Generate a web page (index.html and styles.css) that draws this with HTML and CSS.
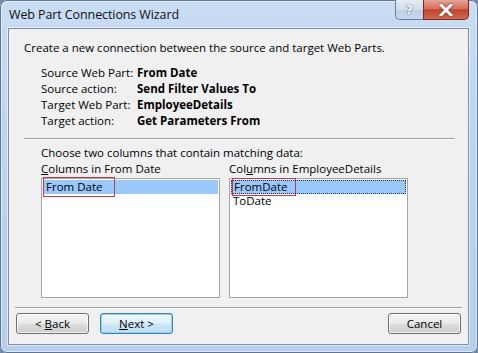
FILE: index.html
```html
<!DOCTYPE html>
<html>
<head>
<meta charset="utf-8">
<link rel="stylesheet" href="styles.css">
</head>
<body>
<div class="window">
  <div class="titlebar">
    <div class="title">Web Part Connections Wizard</div>
    <div class="controls">
      <div class="ctl help">?</div>
      <div class="ctl close">
        <svg width="14" height="12" viewBox="0 0 14 12"><path d="M2 1 L12 11 M12 1 L2 11" stroke="#fff" stroke-width="3" stroke-linecap="square"/></svg>
      </div>
    </div>
  </div>
  <div class="client">
    <div class="top">
      <div class="intro">Create a new connection between the source and target Web Parts.</div>
      <div class="details">
        <span>Source Web Part:</span><b>From Date</b>
        <span>Source action:</span><b>Send Filter Values To</b>
        <span>Target Web Part:</span><b>EmployeeDetails</b>
        <span>Target action:</span><b>Get Parameters From</b>
      </div>
      <div class="sep"></div>
      <div class="choose">Choose two columns that contain matching data:</div>
      <div class="lists">
        <div class="col">
          <div class="lbl"><u>C</u>olumns in From Date</div>
          <div class="listbox">
            <div class="item sel"><span class="mark">From Date</span></div>
          </div>
        </div>
        <div class="col">
          <div class="lbl">Col<u>u</u>mns in EmployeeDetails</div>
          <div class="listbox">
            <div class="item sel focus"><span class="mark">FromDate</span></div>
            <div class="item">ToDate</div>
          </div>
        </div>
      </div>
    </div>
    <div class="sep2"></div>
    <div class="buttons">
      <div class="btn"><span>&lt; <u>B</u>ack</span></div>
      <div class="btn default"><span><u>N</u>ext &gt;</span></div>
      <div class="spacer"></div>
      <div class="btn"><span>Cancel</span></div>
    </div>
  </div>
</div>
</body>
</html>
```
FILE: styles.css
```css
* { box-sizing: border-box; }
html, body { margin: 0; padding: 0; }
body {
  width: 478px; height: 353px; overflow: hidden;
  background: #6d87a8;
  font-family: "Open Sans", "Noto Sans", sans-serif;
  font-size: 11.5px;
  color: #000;
}
.window {
  width: 478px; height: 353px;
  background: linear-gradient(180deg, #c9ddf3 0%, #bcd4ee 40%, #b7cfea 100%);
  border-radius: 7px;
  box-shadow: inset 0 0 0 1px #5d7597, inset 0 0 0 2px rgba(255,255,255,0.5);
  display: flex; flex-direction: column;
}
.titlebar {
  height: 28px;
  display: flex; justify-content: space-between; align-items: flex-start;
  flex: none;
}
.title {
  padding: 6px 0 0 9px;
  font-size: 12.5px;
  color: #111;
  letter-spacing: -0.1px;
}
.controls { display: flex; margin-right: 9px; }
.ctl {
  height: 20px;
  border: 1px solid #6b7f9a;
  border-top: none;
  display: flex; align-items: center; justify-content: center;
}
.help {
  width: 28px;
  border-radius: 0 0 0 5px;
  border-right: none;
  background: linear-gradient(180deg, #e4ecf6 0%, #d2deec 50%, #bfd0e4 51%, #c9d9ec 100%);
  color: #fff;
  font-size: 13px; font-weight: bold;
  text-shadow: 0 0 1px #3a4c66, 0 0 1px #3a4c66;
  font-family: "DejaVu Sans", sans-serif;
}
.close {
  width: 46px;
  border-radius: 0 0 5px 0;
  border-color: #7a2a24;
  background: linear-gradient(180deg, #e7a598 0%, #d7705c 45%, #c1442c 52%, #d26a4f 100%);
}
.close svg { filter: drop-shadow(0 0 1px #5b1d14); }
.client {
  flex: none;
  margin: 0 9px 0 8px;
  height: 317px;
  background: #f0f0f0;
  border: 1px solid #7f8fa6;
  box-shadow: 0 0 0 1px rgba(255,255,255,0.55);
  display: flex; flex-direction: column;
}
.top { padding: 11px 13px 0 15px; }
.intro { line-height: 16px; }
.details {
  margin-top: 9px;
  padding-left: 17px;
  display: grid;
  grid-template-columns: 96px auto;
  line-height: 16px;
}
.details b { font-weight: bold; }
.sep {
  margin-top: 9px;
  height: 2px;
  border-top: 1px solid #a0a0a0;
  border-bottom: 1px solid #fff;
}
.choose { margin-top: 5px; padding-left: 17px; line-height: 16px; }
.lists { display: flex; gap: 9px; padding-left: 17px; }
.col { display: flex; flex-direction: column; width: 179px; }
.lbl { line-height: 16px; height: 17px; }
.listbox {
  height: 120px;
  background: #fff;
  border: 1px solid #a5a5a5;
  padding: 1px;
}
.item {
  height: 14px;
  line-height: 14px;
  padding-left: 2px;
  white-space: nowrap;
}
.item.sel { background: #99c8fc; }
.item.focus { outline: 1px dotted #333; outline-offset: -1px; }
.mark {
  display: inline-block;
  outline: 1px solid #c3374d;
  outline-offset: 2px;
  padding-right: 10px;
  margin-left: 1px;
  height: 14px;
}
.item.focus .mark { padding-right: 6px; outline-offset: 1px; }
.sep2 {
  margin: 9px 6px 0 6px;
  height: 2px;
  border-top: 1px solid #a0a0a0;
  border-bottom: 1px solid #fff;
}
.buttons {
  display: flex;
  padding: 4px 7px 0 7px;
  gap: 11px;
}
.spacer { flex: 1; }
.btn {
  width: 73px; height: 21px;
  border: 1px solid #707070;
  border-radius: 3px;
  background: linear-gradient(180deg, #f3f3f3 0%, #ebebeb 48%, #dddddd 52%, #cfcfcf 100%);
  box-shadow: inset 0 0 0 1px rgba(255,255,255,0.7);
  display: flex; align-items: center; justify-content: center;
  line-height: 14px;
  white-space: pre;
}
.btn.default {
  border-color: #3c7fb1;
  background: linear-gradient(180deg, #eef7fc 0%, #e1f0f9 48%, #cfe6f5 52%, #bedff2 100%);
  box-shadow: inset 0 0 0 1px #8fd3f5;
}
```
